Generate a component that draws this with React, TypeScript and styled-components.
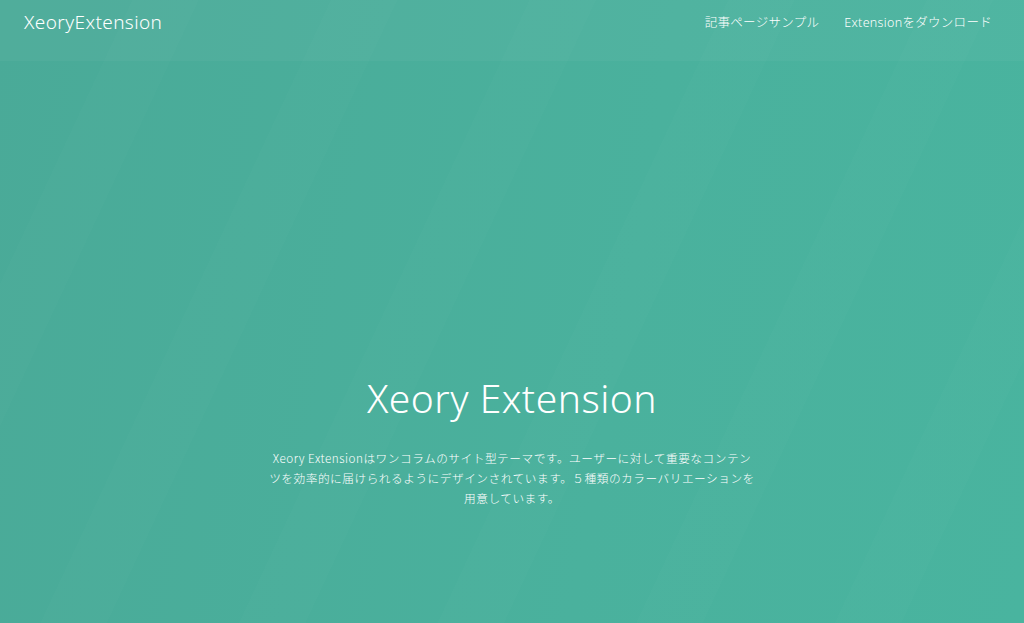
import React from 'react';
import styled, { createGlobalStyle } from 'styled-components';

const GlobalStyle = createGlobalStyle`
  html, body {
    margin: 0;
    padding: 0;
  }
  body {
    font-family: "Noto Sans", "Noto Sans CJK JP", sans-serif;
    color: #ffffff;
    background: #4aac9a;
  }
  * {
    box-sizing: border-box;
  }
`;

const Page = styled.div`
  min-height: 100vh;
  display: flex;
  flex-direction: column;
  background:
    repeating-linear-gradient(
      115deg,
      rgba(255, 255, 255, 0) 0px,
      rgba(255, 255, 255, 0) 120px,
      rgba(255, 255, 255, 0.01) 120px,
      rgba(255, 255, 255, 0.01) 180px
    ),
    linear-gradient(100deg, #4aaa98 0%, #4ab19d 60%, #49b49f 100%);
`;

const Header = styled.header`
  height: 61px;
  display: flex;
  align-items: center;
  justify-content: space-between;
  padding: 0 32px 18px 24px;
  background: rgba(255, 255, 255, 0.035);
`;

const Logo = styled.a`
  font-size: 19px;
  font-weight: 300;
  letter-spacing: 0.4px;
  color: #ffffff;
  text-decoration: none;
`;

const Nav = styled.nav`
  display: flex;
  gap: 25px;
`;

const NavLink = styled.a`
  font-size: 12.5px;
  font-weight: 300;
  letter-spacing: 0.3px;
  color: #ffffff;
  text-decoration: none;
`;

const Hero = styled.main`
  flex: 1;
  display: flex;
  flex-direction: column;
  align-items: center;
  justify-content: flex-end;
  padding-bottom: 115px;
  text-align: center;
`;

const Title = styled.h1`
  margin: 0 0 26px;
  font-size: 39px;
  font-weight: 300;
  letter-spacing: 0.5px;
  line-height: 1.2;
`;

const Lead = styled.p`
  margin: 0;
  width: 490px;
  font-family: "Noto Sans CJK JP", sans-serif;
  font-size: 11.7px;
  font-weight: 300;
  letter-spacing: 0.5px;
  line-height: 20px;
  line-break: anywhere;
`;

export default function App() {
  return (
    <>
      <GlobalStyle />
      <Page>
        <Header>
          <Logo href="#">XeoryExtension</Logo>
          <Nav>
            <NavLink href="#">記事ページサンプル</NavLink>
            <NavLink href="#">Extensionをダウンロード</NavLink>
          </Nav>
        </Header>
        <Hero>
          <Title>Xeory Extension</Title>
          <Lead>
            Xeory Extensionはワンコラムのサイト型テーマです。ユーザーに対して重要なコンテンツを効率的に届けられるようにデザインされています。５種類のカラーバリエーションを用意しています。
          </Lead>
        </Hero>
      </Page>
    </>
  );
}
